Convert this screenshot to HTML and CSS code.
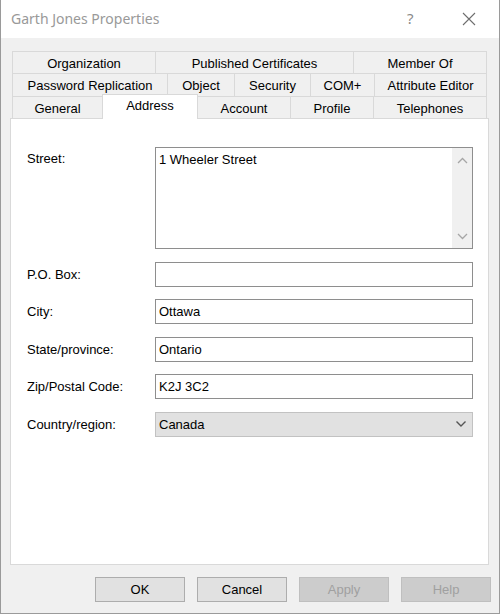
FILE: index.html
```html
<!DOCTYPE html>
<html>
<head>
<meta charset="utf-8">
<link rel="stylesheet" href="styles.css">
</head>
<body>
<div class="window">
  <div class="titlebar">
    <span class="title">Garth Jones Properties</span>
    <span class="help-glyph">?</span>
    <span class="close">
      <svg width="14" height="14" viewBox="0 0 14 14"><path d="M1 1 L13 13 M13 1 L1 13" stroke="#6e6e6e" stroke-width="1.1" fill="none"/></svg>
    </span>
  </div>
  <div class="content">
    <div class="tabs">
      <div class="tab-row row-a">
        <div class="tab t-org">Organization</div>
        <div class="tab t-pub">Published Certificates</div>
        <div class="tab t-fill">Member Of</div>
      </div>
      <div class="tab-row row-b">
        <div class="tab t-pwd">Password Replication</div>
        <div class="tab t-obj">Object</div>
        <div class="tab t-sec">Security</div>
        <div class="tab t-com">COM+</div>
        <div class="tab t-fill">Attribute Editor</div>
      </div>
      <div class="tab-row row-c">
        <div class="tab t-gen">General</div>
        <div class="tab t-addr selected">Address</div>
        <div class="tab t-acc">Account</div>
        <div class="tab t-pro">Profile</div>
        <div class="tab t-fill">Telephones</div>
      </div>
    </div>
    <div class="panel">
      <div class="form">
        <div class="lbl lbl-top">Street:</div>
        <div class="textarea">
          <span class="ta-text">1 Wheeler Street</span>
          <div class="scroll">
            <svg width="11" height="7" viewBox="0 0 11 7"><path d="M1 6 L5.5 1.5 L10 6" stroke="#a6a6a6" stroke-width="1.3" fill="none"/></svg>
            <svg width="11" height="7" viewBox="0 0 11 7"><path d="M1 1 L5.5 5.5 L10 1" stroke="#a6a6a6" stroke-width="1.3" fill="none"/></svg>
          </div>
        </div>
        <div class="lbl">P.O. Box:</div>
        <div class="input"></div>
        <div class="lbl">City:</div>
        <div class="input">Ottawa</div>
        <div class="lbl">State/province:</div>
        <div class="input">Ontario</div>
        <div class="lbl">Zip/Postal Code:</div>
        <div class="input">K2J 3C2</div>
        <div class="lbl">Country/region:</div>
        <div class="select">
          <span>Canada</span>
          <svg width="12" height="8" viewBox="0 0 12 8"><path d="M1.5 1.5 L6 6 L10.5 1.5" stroke="#555" stroke-width="1.4" fill="none"/></svg>
        </div>
      </div>
    </div>
    <div class="buttons">
      <div class="btn">OK</div>
      <div class="btn">Cancel</div>
      <div class="btn disabled">Apply</div>
      <div class="btn disabled">Help</div>
    </div>
  </div>
</div>
</body>
</html>
```
FILE: styles.css
```css
html, body {
  margin: 0;
  padding: 0;
}
body {
  width: 500px;
  height: 614px;
  overflow: hidden;
  font-family: "Liberation Sans", Arial, sans-serif;
  font-size: 13px;
  color: #000;
  background: #f0f0f0;
}
.window {
  width: 500px;
  height: 614px;
  box-sizing: border-box;
  border: 1px solid #9a9a9a;
  border-top: none;
  background: #f0f0f0;
  display: flex;
  flex-direction: column;
}
.titlebar {
  height: 38px;
  background: #fff;
  display: flex;
  align-items: center;
  padding-left: 10px;
  flex-shrink: 0;
}
.title {
  font-family: "Noto Sans", "Open Sans", sans-serif;
  font-size: 14px;
  color: #999;
  flex: 1;
  margin-top: -1px;
}
.help-glyph {
  font-family: "Noto Sans", sans-serif;
  font-size: 15px;
  color: #8a8a8a;
  width: 20px;
  margin-right: 35px;
  margin-top: -2px;
}
.close {
  width: 14px;
  height: 14px;
  margin-right: 23px;
  display: flex;
}
.content {
  padding-top: 13px;
  flex: 1;
  display: flex;
  flex-direction: column;
}
.tabs {
  margin-left: 11px;
  width: 475px;
  display: flex;
  flex-direction: column;
}
.tab-row {
  display: flex;
}
.row-a { height: 22px; }
.row-b { height: 23px; }
.row-c { height: 22px; align-items: flex-start; }
.tab {
  box-sizing: border-box;
  height: 100%;
  border-top: 1px solid #d9d9d9;
  border-left: 1px solid #d9d9d9;
  background: #f0f0f0;
  display: flex;
  align-items: center;
  justify-content: center;
  white-space: nowrap;
  padding-top: 1px;
}
.tab:last-child {
  border-right: 1px solid #d9d9d9;
}
.t-org { width: 143px; }
.t-pub { width: 198px; }
.t-pwd { width: 155px; }
.t-obj { width: 67px; }
.t-sec { width: 76px; }
.t-com { width: 64px; }
.t-gen { width: 90px; }
.t-addr { width: 96px; }
.t-acc { width: 93px; }
.t-pro { width: 83px; }
.t-fill { flex: 1; }
.tab.selected {
  position: relative;
  z-index: 1;
  height: 25px;
  margin-top: -2px;
  background: #fff;
  border-right: 1px solid #d9d9d9;
  margin-right: -1px;
  padding-top: 0;
  padding-bottom: 4px;
}
.panel {
  margin-left: 9px;
  width: 479px;
  height: 447px;
  box-sizing: border-box;
  border: 1px solid #d9d9d9;
  background: #fff;
  padding: 28px 15px 0 16px;
}
.form {
  display: grid;
  grid-template-columns: 128px 318px;
  row-gap: 12.5px;
}
.lbl {
  line-height: 25px;
  white-space: nowrap;
}
.lbl-top {
  line-height: 15px;
  padding-top: 4px;
}
.input, .textarea, .select {
  box-sizing: border-box;
  border: 1px solid #8e8e8e;
  background: #fff;
  height: 25px;
  line-height: 23px;
  padding-left: 3px;
}
.textarea {
  height: 102px;
  line-height: 15px;
  display: flex;
  justify-content: space-between;
  padding: 3px 0 0 3px;
}
.ta-text {
  padding-top: 1px;
}
.scroll {
  width: 20px;
  margin-top: -3px;
  background: #f0f0f0;
  display: flex;
  flex-direction: column;
  justify-content: space-between;
  align-items: center;
  padding: 9px 0 8px;
}
.select {
  background: #e1e1e1;
  border-color: #c2c2c2;
  display: flex;
  justify-content: space-between;
  align-items: center;
  padding-right: 5px;
}
.select span {
  line-height: 23px;
}
.buttons {
  display: flex;
  justify-content: flex-end;
  gap: 12px;
  padding-right: 8px;
  margin-top: 12px;
}
.btn {
  box-sizing: border-box;
  width: 90px;
  height: 25px;
  border: 1px solid #adadad;
  background: #e1e1e1;
  display: flex;
  align-items: center;
  justify-content: center;
}
.btn.disabled {
  background: #cccccc;
  border-color: #bfbfbf;
  color: #a0a0a0;
}
```
